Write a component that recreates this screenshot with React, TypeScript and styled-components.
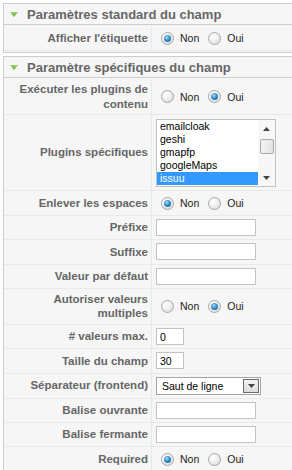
import styled, { createGlobalStyle } from 'styled-components';

const GlobalStyle = createGlobalStyle`
  html, body {
    margin: 0;
    padding: 0;
    background: #ffffff;
    overflow: hidden;
  }
  body {
    font-family: 'Liberation Sans', Arial, sans-serif;
  }
`;

const Page = styled.div`
  padding: 3px 0 0 3px;
`;

const Panel = styled.div`
  border: 1px solid #cccccc;
  border-right: none;
  margin-bottom: 3px;
  background: #f6f6f6;
`;

const PanelTitle = styled.h3`
  margin: 0;
  height: 20px;
  display: flex;
  align-items: center;
  gap: 9px;
  padding-left: 6px;
  border-bottom: 1px solid #cccccc;
  font-size: 13px;
  font-weight: bold;
  color: #666666;
`;

const ParamList = styled.div`
  padding: 1px 0;
`;

const Row = styled.div`
  display: flex;
  min-height: 23.33px;
  border-bottom: 1px solid #e9e9e9;
`;

const Key = styled.div`
  flex: none;
  width: 144px;
  padding: 3px 3px 3px 0;
  border-right: 1px solid #e9e9e9;
  display: flex;
  align-items: center;
  justify-content: flex-end;
  text-align: right;
  font-size: 11.5px;
  line-height: 14.5px;
  font-weight: bold;
  color: #666666;
`;

const Value = styled.div<{ $radios?: boolean }>`
  flex: 1;
  padding: 3px 4px;
  min-height: ${(p) => (p.$radios ? '18px' : '0')};
  display: flex;
  align-items: center;
  font-size: 10.5px;
  color: #222222;
`;

const RadioDot = styled.span<{ $checked?: boolean }>`
  position: relative;
  width: 13px;
  height: 13px;
  box-sizing: border-box;
  border-radius: 50%;
  border: 1px solid #a8a8a8;
  background: radial-gradient(circle at 35% 30%, #ffffff 0%, #f0f0f0 45%, #d2d2d2 100%);
  margin-left: 5px;
  flex: none;

  &::after {
    content: '';
    display: ${(p) => (p.$checked ? 'block' : 'none')};
    position: absolute;
    left: 2px;
    top: 2px;
    width: 7px;
    height: 7px;
    border-radius: 50%;
    background: radial-gradient(circle at 40% 35%, #a8dcf8 0%, #3c9ad2 40%, #0d4f7e 100%);
  }
`;

const RadioText = styled.span`
  margin-left: 6px;
  margin-right: 4px;
`;

const TextInput = styled.input<{ $small?: boolean }>`
  box-sizing: border-box;
  width: ${(p) => (p.$small ? '28px' : '100px')};
  height: 17px;
  margin: 0;
  padding: 0 3px;
  border: 1px solid #c3c3c3;
  background: #ffffff;
  font-family: 'Liberation Sans', Arial, sans-serif;
  font-size: 10.5px;
  color: #000000;
  outline: none;
`;

const ListBox = styled.div`
  box-sizing: border-box;
  width: 120px;
  height: 68px;
  margin-top: 1px;
  border: 1px solid #c3c3c3;
  background: #ffffff;
  display: flex;
`;

const ListItems = styled.div`
  flex: 1;
  overflow: hidden;
`;

const ListItem = styled.div<{ $selected?: boolean }>`
  height: 13px;
  line-height: 13px;
  padding-left: 3px;
  font-size: 10.5px;
  color: ${(p) => (p.$selected ? '#ffffff' : '#000000')};
  background: ${(p) => (p.$selected ? '#3399ff' : 'transparent')};
`;

const ScrollBar = styled.div`
  flex: none;
  width: 17px;
  background: #f7f7f7;
  display: flex;
  flex-direction: column;
  align-items: center;
`;

const ScrollArrow = styled.div`
  height: 17px;
  width: 17px;
  display: flex;
  align-items: center;
  justify-content: center;
`;

const ScrollThumb = styled.div`
  box-sizing: border-box;
  width: 14px;
  height: 15px;
  margin-top: 2px;
  border: 1px solid #a9a9a9;
  border-radius: 2px;
  background: linear-gradient(to right, #f4f4f4, #e2e2e2);
`;

const ScrollTrack = styled.div`
  flex: 1;
`;

const SelectBox = styled.div`
  box-sizing: border-box;
  width: 105px;
  height: 18px;
  border: 1px solid #a5a5a5;
  background: #ffffff;
  display: flex;
  align-items: center;
  padding: 1px;
`;

const SelectText = styled.span`
  flex: 1;
  padding-left: 4px;
  font-size: 10.5px;
  color: #000000;
`;

const SelectButton = styled.span`
  box-sizing: border-box;
  width: 16px;
  height: 14px;
  border: 1px solid #6a6a6a;
  background: linear-gradient(#f2f2f2, #dcdcdc);
  display: flex;
  align-items: center;
  justify-content: center;
`;

const Arrow = ({ up }: { up?: boolean }) => (
  <svg width="7" height="4" viewBox="0 0 7 4">
    <polygon points={up ? '0,4 7,4 3.5,0' : '0,0 7,0 3.5,4'} fill="#444" />
  </svg>
);

const Toggler = () => (
  <svg width="8" height="5" viewBox="0 0 8 5">
    <defs>
      <linearGradient id="tg" x1="0" y1="0" x2="0" y2="1">
        <stop offset="0" stopColor="#9fd46a" />
        <stop offset="1" stopColor="#6aa83a" />
      </linearGradient>
    </defs>
    <polygon points="0,0 8,0 4,5" fill="url(#tg)" />
  </svg>
);

const YesNo = ({ yes }: { yes?: boolean }) => (
  <>
    <RadioDot $checked={!yes} />
    <RadioText>Non</RadioText>
    <RadioDot $checked={yes} />
    <RadioText>Oui</RadioText>
  </>
);

const plugins = ['emailcloak', 'geshi', 'gmapfp', 'googleMaps', 'issuu'];

const App = () => {
  return (
    <Page>
      <GlobalStyle />
      <Panel>
        <PanelTitle>
          <Toggler />
          Paramètres standard du champ
        </PanelTitle>
        <ParamList>
          <Row>
            <Key>Afficher l'étiquette</Key>
            <Value $radios>
              <YesNo />
            </Value>
          </Row>
        </ParamList>
      </Panel>
      <Panel>
        <PanelTitle>
          <Toggler />
          Paramètre spécifiques du champ
        </PanelTitle>
        <ParamList>
          <Row>
            <Key>
              Exécuter les plugins de
              <br />
              contenu
            </Key>
            <Value $radios>
              <YesNo yes />
            </Value>
          </Row>
          <Row>
            <Key>Plugins spécifiques</Key>
            <Value>
              <ListBox>
                <ListItems>
                  {plugins.map((name) => (
                    <ListItem key={name} $selected={name === 'issuu'}>
                      {name}
                    </ListItem>
                  ))}
                </ListItems>
                <ScrollBar>
                  <ScrollArrow>
                    <Arrow up />
                  </ScrollArrow>
                  <ScrollThumb />
                  <ScrollTrack />
                  <ScrollArrow>
                    <Arrow />
                  </ScrollArrow>
                </ScrollBar>
              </ListBox>
            </Value>
          </Row>
          <Row>
            <Key>Enlever les espaces</Key>
            <Value $radios>
              <YesNo />
            </Value>
          </Row>
          <Row>
            <Key>Préfixe</Key>
            <Value>
              <TextInput />
            </Value>
          </Row>
          <Row>
            <Key>Suffixe</Key>
            <Value>
              <TextInput />
            </Value>
          </Row>
          <Row>
            <Key>Valeur par défaut</Key>
            <Value>
              <TextInput />
            </Value>
          </Row>
          <Row>
            <Key>
              Autoriser valeurs
              <br />
              multiples
            </Key>
            <Value $radios>
              <YesNo yes />
            </Value>
          </Row>
          <Row>
            <Key># valeurs max.</Key>
            <Value>
              <TextInput $small defaultValue="0" />
            </Value>
          </Row>
          <Row>
            <Key>Taille du champ</Key>
            <Value>
              <TextInput $small defaultValue="30" />
            </Value>
          </Row>
          <Row>
            <Key>Séparateur (frontend)</Key>
            <Value>
              <SelectBox>
                <SelectText>Saut de ligne</SelectText>
                <SelectButton>
                  <Arrow />
                </SelectButton>
              </SelectBox>
            </Value>
          </Row>
          <Row>
            <Key>Balise ouvrante</Key>
            <Value>
              <TextInput />
            </Value>
          </Row>
          <Row>
            <Key>Balise fermante</Key>
            <Value>
              <TextInput />
            </Value>
          </Row>
          <Row>
            <Key>Required</Key>
            <Value $radios>
              <YesNo />
            </Value>
          </Row>
        </ParamList>
      </Panel>
    </Page>
  );
};

export default App;
